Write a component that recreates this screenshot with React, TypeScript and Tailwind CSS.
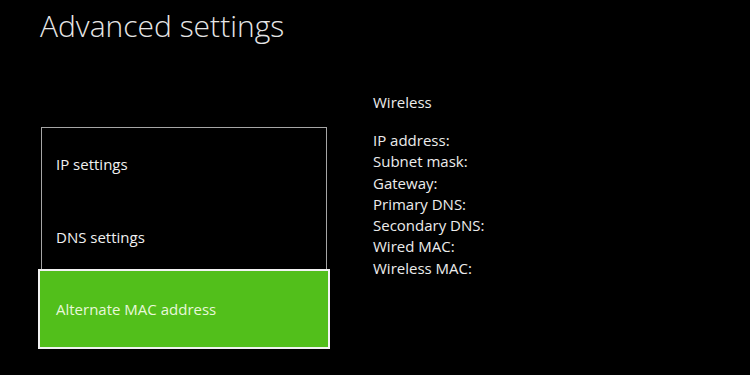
const details = [
  'IP address:',
  'Subnet mask:',
  'Gateway:',
  'Primary DNS:',
  'Secondary DNS:',
  'Wired MAC:',
  'Wireless MAC:',
]

export default function App() {
  return (
    <div className="w-[750px] h-[375px] bg-black text-white overflow-hidden font-['Open_Sans',sans-serif]">
      <h1 className="pl-[40px] pt-[2px] text-[30px] leading-[48px] font-light text-[#e6e6e6]">
        Advanced settings
      </h1>

      <div className="flex mt-[77px]">
        {/* menu */}
        <div className="ml-[38px] w-[292px] flex flex-col">
          <div className="mx-[3px] border border-b-0 border-[#a6a6a6]">
            <div className="h-[73px] flex items-center pl-[14px] text-[15px] text-[#f0f0f0]">
              IP settings
            </div>
            <div className="h-[68px] flex items-center pl-[14px] pt-[4px] text-[15px] text-[#f0f0f0]">
              DNS settings
            </div>
          </div>
          <div className="h-[80px] border-2 border-[#f2f2f2] bg-[#52bf1b] flex items-center pl-[16px] text-[15px] text-[#e8f8da]">
            Alternate MAC address
          </div>
        </div>

        {/* info */}
        <div className="ml-[43px] -mt-[35px] text-[15px] text-[#ececec]">
          <div className="leading-[21px]">Wireless</div>
          <div className="mt-[17px] flex flex-col leading-[21.3px]">
            {details.map((d) => (
              <div key={d}>{d}</div>
            ))}
          </div>
        </div>
      </div>
    </div>
  )
}
